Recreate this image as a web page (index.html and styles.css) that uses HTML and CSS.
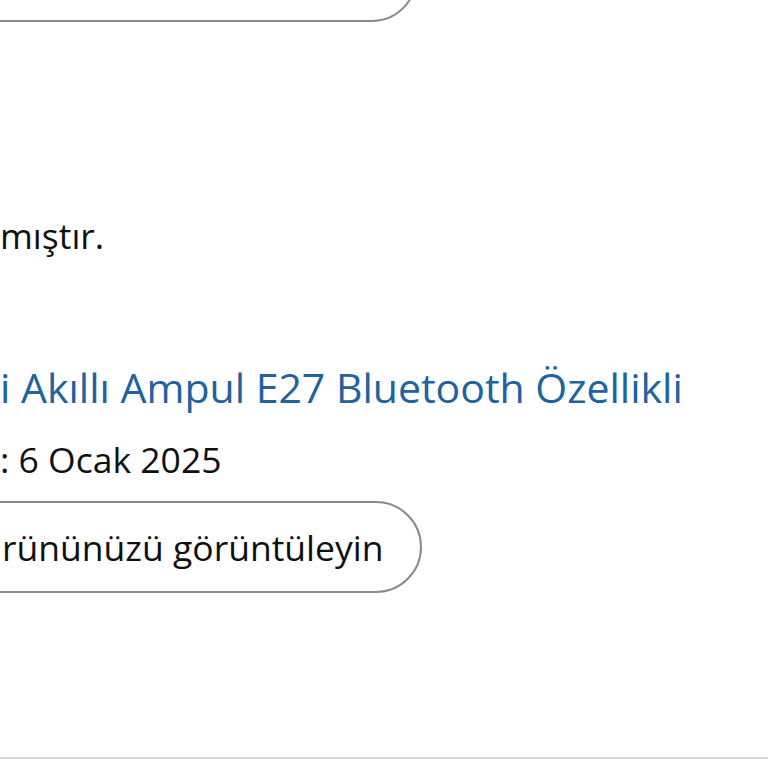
FILE: index.html
```html
<!DOCTYPE html>
<html lang="tr">
<head>
<meta charset="utf-8">
<title>Sipariş</title>
<link rel="stylesheet" href="styles.css">
</head>
<body>
<div class="page">
  <div class="btn btn-top"></div>
  <p class="note">mıştır.</p>
  <a class="title" href="#">i Akıllı Ampul E27 Bluetooth Özellikli</a>
  <p class="date">: 6 Ocak 2025</p>
  <a class="btn btn-view" href="#">rününüzü görüntüleyin</a>
  <div class="divider"></div>
</div>
</body>
</html>
```
FILE: styles.css
```css
html, body {
  margin: 0;
  padding: 0;
  background: #ffffff;
  overflow: hidden;
}
.page {
  width: 768px;
  height: 768px;
  display: flex;
  flex-direction: column;
  align-items: flex-start;
  font-family: "Open Sans", "Liberation Sans", sans-serif;
  font-weight: 500;
  color: #0f1111;
  font-size: 36px;
  overflow: hidden;
}
.btn {
  box-sizing: border-box;
  display: block;
  width: 500px;
  margin-left: -80px;
  padding-left: 80px;
  border: 2px solid #888c8c;
  border-radius: 46px;
  background: #ffffff;
  color: #0f1111;
  text-decoration: none;
}
.btn-top {
  height: 90px;
  margin-top: -68px;
  width: 497px;
}
.note {
  margin: 189px 0 0 0;
  font-size: 35.5px;
  line-height: 48px;
}
.title {
  margin-top: 102px;
  font-size: 41px;
  line-height: 52px;
  color: #2162a1;
  text-decoration: none;
}
.date {
  margin: 22px 0 0 0;
  font-size: 35.5px;
  line-height: 48px;
}
.btn-view {
  margin-top: 18px;
  height: 92px;
  line-height: 88px;
  width: 502px;
  font-size: 35.5px;
}
.divider {
  margin-top: 164px;
  width: 768px;
  height: 2px;
  background: #d5d9d9;
}
```
